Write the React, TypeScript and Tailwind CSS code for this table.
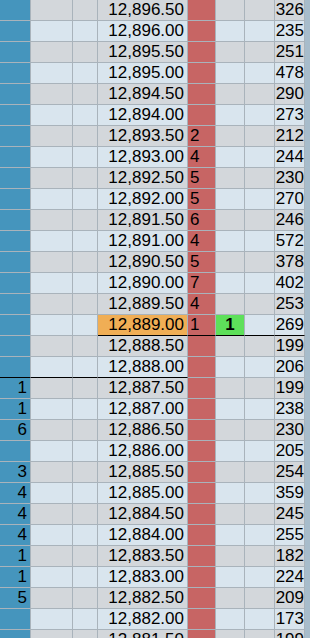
import React from "react";

type Row = {
  price: string;
  bid?: string;
  ask?: string;
  trade?: string;
  vol: string;
};

const rows: Row[] = [
  { price: "12,896.50", vol: "326" },
  { price: "12,896.00", vol: "235" },
  { price: "12,895.50", vol: "251" },
  { price: "12,895.00", vol: "478" },
  { price: "12,894.50", vol: "290" },
  { price: "12,894.00", vol: "273" },
  { price: "12,893.50", ask: "2", vol: "212" },
  { price: "12,893.00", ask: "4", vol: "244" },
  { price: "12,892.50", ask: "5", vol: "230" },
  { price: "12,892.00", ask: "5", vol: "270" },
  { price: "12,891.50", ask: "6", vol: "246" },
  { price: "12,891.00", ask: "4", vol: "572" },
  { price: "12,890.50", ask: "5", vol: "378" },
  { price: "12,890.00", ask: "7", vol: "402" },
  { price: "12,889.50", ask: "4", vol: "253" },
  { price: "12,889.00", ask: "1", trade: "1", vol: "269" },
  { price: "12,888.50", vol: "199" },
  { price: "12,888.00", vol: "206" },
  { price: "12,887.50", bid: "1", vol: "199" },
  { price: "12,887.00", bid: "1", vol: "238" },
  { price: "12,886.50", bid: "6", vol: "230" },
  { price: "12,886.00", vol: "205" },
  { price: "12,885.50", bid: "3", vol: "254" },
  { price: "12,885.00", bid: "4", vol: "359" },
  { price: "12,884.50", bid: "4", vol: "245" },
  { price: "12,884.00", bid: "4", vol: "255" },
  { price: "12,883.50", bid: "1", vol: "182" },
  { price: "12,883.00", bid: "1", vol: "224" },
  { price: "12,882.50", bid: "5", vol: "209" },
  { price: "12,882.00", vol: "173" },
  { price: "12,881.50", vol: "199" },
];

const LAST_INDEX = 15;
const SPLIT_INDEX = 17;

function LadderRow({ row, index }: { row: Row; index: number }) {
  const shade = index % 2 === 0 ? "bg-[#d3d7db]" : "bg-[#d9e5ee]";
  const leftLine = index === SPLIT_INDEX ? "border-b-black" : "border-b-[#a9b3bb]";
  const rightLine = index === LAST_INDEX ? "border-b-black" : "border-b-[#a9b3bb]";
  const isLast = index === LAST_INDEX;

  return (
    <div className="flex h-[21px] text-[17px] leading-[20px] text-black">
      <div className={`w-[31px] shrink-0 border-r border-b border-r-[#a9b3bb] ${leftLine} bg-[#4595bd] pr-[3px] text-right`}>
        {row.bid}
      </div>
      <div className={`w-[42px] shrink-0 border-r border-b border-r-[#a9b3bb] ${leftLine} ${shade}`} />
      <div className={`w-[25px] shrink-0 border-r border-b border-r-[#a9b3bb] ${leftLine} ${shade}`} />
      <div
        className={`w-[90px] shrink-0 border-r border-b border-r-[#a9b3bb] ${isLast ? "border-b-black bg-[#f0ae55]" : `${leftLine} ${shade}`} pr-[3px] text-right`}
      >
        {row.price}
      </div>
      <div className={`w-[28px] shrink-0 border-r border-b border-r-[#a9b3bb] ${rightLine} bg-[#c76564] pl-[2px]`}>
        {row.ask}
      </div>
      <div
        className={`w-[29px] shrink-0 border-r border-b border-r-[#a9b3bb] ${rightLine} ${row.trade ? "bg-[#5ee05a] font-bold" : shade} text-center`}
      >
        {row.trade}
      </div>
      <div className={`w-[30px] shrink-0 border-r border-b border-r-[#a9b3bb] ${rightLine} ${shade}`} />
      <div className={`w-[30px] shrink-0 border-r border-b border-r-[#a9b3bb] ${rightLine} ${shade} text-right`}>
        {row.vol}
      </div>
    </div>
  );
}

export default function App() {
  return (
    <div className="flex h-[638px] w-[323px] overflow-hidden bg-white font-['Liberation_Sans',Arial,sans-serif]">
      <div className="flex flex-col">
        {rows.map((row, i) => (
          <LadderRow key={row.price} row={row} index={i} />
        ))}
      </div>
      <div className="h-full w-[5px] shrink-0 bg-[#a7bccb]" />
    </div>
  );
}
